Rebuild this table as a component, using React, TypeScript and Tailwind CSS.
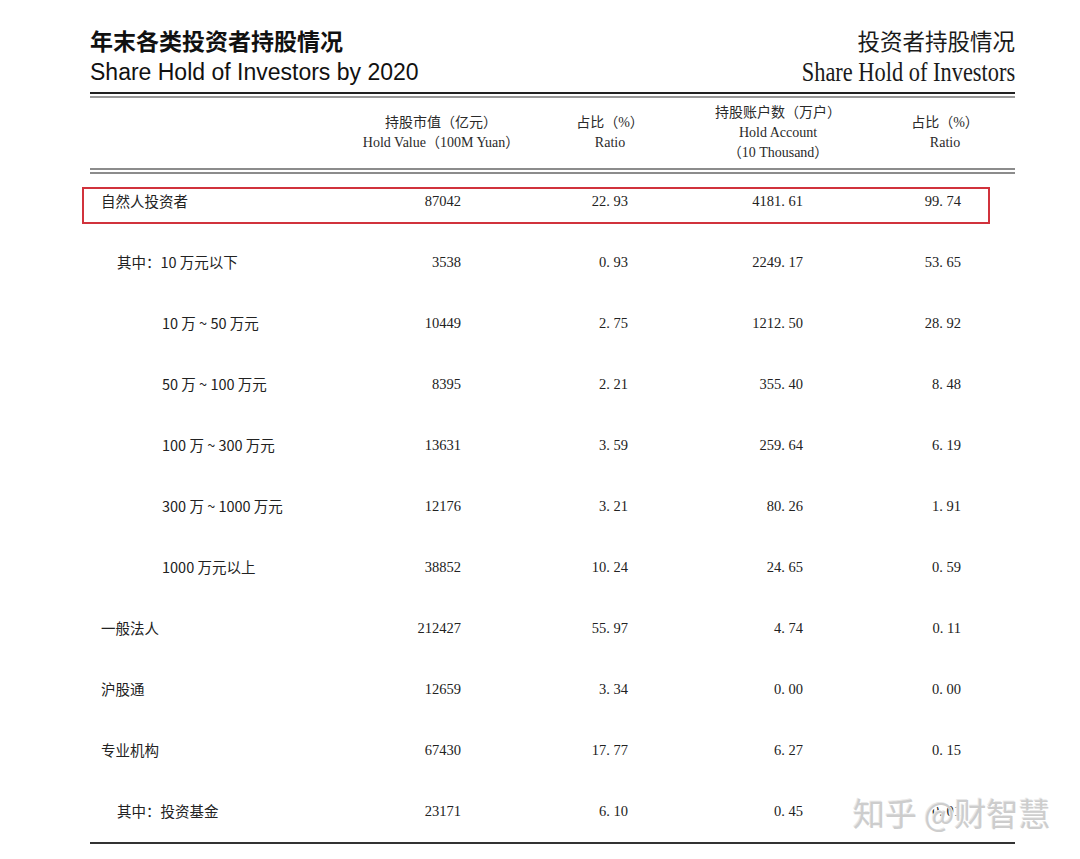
import React from "react";

type Row = {
  label: string;
  level: 0 | 1 | 2;
  value: string;
  ratio: string;
  accounts: string;
  accRatio: string;
};

const rows: Row[] = [
  { label: "自然人投资者", level: 0, value: "87042", ratio: "22. 93", accounts: "4181. 61", accRatio: "99. 74" },
  { label: "其中：10 万元以下", level: 1, value: "3538", ratio: "0. 93", accounts: "2249. 17", accRatio: "53. 65" },
  { label: "10 万 ~ 50 万元", level: 2, value: "10449", ratio: "2. 75", accounts: "1212. 50", accRatio: "28. 92" },
  { label: "50 万 ~ 100 万元", level: 2, value: "8395", ratio: "2. 21", accounts: "355. 40", accRatio: "8. 48" },
  { label: "100 万 ~ 300 万元", level: 2, value: "13631", ratio: "3. 59", accounts: "259. 64", accRatio: "6. 19" },
  { label: "300 万 ~ 1000 万元", level: 2, value: "12176", ratio: "3. 21", accounts: "80. 26", accRatio: "1. 91" },
  { label: "1000 万元以上", level: 2, value: "38852", ratio: "10. 24", accounts: "24. 65", accRatio: "0. 59" },
  { label: "一般法人", level: 0, value: "212427", ratio: "55. 97", accounts: "4. 74", accRatio: "0. 11" },
  { label: "沪股通", level: 0, value: "12659", ratio: "3. 34", accounts: "0. 00", accRatio: "0. 00" },
  { label: "专业机构", level: 0, value: "67430", ratio: "17. 77", accounts: "6. 27", accRatio: "0. 15" },
  { label: "其中：投资基金", level: 1, value: "23171", ratio: "6. 10", accounts: "0. 45", accRatio: "0. 01" },
];

const grid = "grid grid-cols-[266px_170px_168px_168px_166px] w-[938px]";
const cjk = "font-['Noto_Sans_CJK_SC',sans-serif]";
const serif = "font-['Liberation_Serif','Noto_Sans_CJK_SC',serif]";

const HeadCell = ({ lines }: { lines: string[] }) => (
  <div className={`flex flex-col items-center justify-center text-[14px] leading-[20px] text-[#2a2a2a] ${serif}`}>
    {lines.map((l) => (
      <span key={l} className="whitespace-nowrap">
        {l}
      </span>
    ))}
  </div>
);

const DataRow = ({ row, first, last }: { row: Row; first: boolean; last: boolean }) => {
  const pad = row.level === 0 ? "pl-[11px]" : row.level === 1 ? "pl-[27px]" : "pl-[72px]";
  return (
    <div className={`relative ${grid} ${last ? "h-[58px]" : "h-[61px]"} pt-[17px] leading-[20px] text-[#222]`}>
      {first && (
        <div className="absolute left-[-8px] top-[13px] w-[908px] h-[37px] border-2 border-[#d1323c]" />
      )}
      <div className={`${pad} ${cjk} text-[14.5px] whitespace-nowrap`}>{row.label}</div>
      <div className={`pr-[65px] text-right ${serif} text-[14.5px] whitespace-pre`}>{row.value}</div>
      <div className={`pr-[66px] text-right ${serif} text-[14.5px] whitespace-pre`}>{row.ratio}</div>
      <div className={`pr-[59px] text-right ${serif} text-[14.5px] whitespace-pre`}>{row.accounts}</div>
      <div className={`pr-[67px] text-right ${serif} text-[14.5px] whitespace-pre`}>{row.accRatio}</div>
    </div>
  );
};

export default function App() {
  return (
    <div className="relative w-[1080px] h-[859px] bg-white overflow-hidden">
      <div className="ml-[90px] w-[925px] pt-[24px]">
        {/* title */}
        <div className="flex justify-between">
          <div className="text-[#111]">
            <div className={`${cjk} font-bold text-[23px] leading-[32px]`}>年末各类投资者持股情况</div>
            <div className="font-['Liberation_Sans',sans-serif] text-[23px] leading-[32px]">
              Share Hold of Investors by 2020
            </div>
          </div>
          <div className="flex flex-col items-end text-[#1a1a1a]">
            <div className={`${cjk} text-[22.5px] leading-[32px]`}>投资者持股情况</div>
            <div className="font-['Liberation_Serif',serif] text-[27px] leading-[32px] scale-x-[0.83] origin-right whitespace-nowrap">
              Share Hold of Investors
            </div>
          </div>
        </div>

        {/* top double rule */}
        <div className="mt-[4px] h-[2px] bg-[#222]" />
        <div className="mt-[2px] h-[2px] bg-[#9a9a9a]" />

        {/* header */}
        <div className={`${grid} h-[70px]`}>
          <div />
          <HeadCell lines={["持股市值（亿元）", "Hold Value（100M Yuan）"]} />
          <HeadCell lines={["占比（%）", "Ratio"]} />
          <HeadCell lines={["持股账户数（万户）", "Hold Account", "（10 Thousand）"]} />
          <HeadCell lines={["占比（%）", "Ratio"]} />
        </div>

        <div className="h-[2px] bg-[#8c8c8c]" />
        <div className="mt-[2px] h-[2px] bg-[#8c8c8c]" />

        {/* body */}
        {rows.map((r, i) => (
          <DataRow key={r.label} row={r} first={i === 0} last={i === rows.length - 1} />
        ))}
        <div className="h-[2px] bg-[#333]" />
      </div>

      {/* watermark */}
      <div
        className={`absolute left-[853px] top-[792px] ${cjk} text-[32px] leading-[40px] text-[#cdcdcd] whitespace-nowrap [text-shadow:1px_1px_0_#ffffff,-1px_-1px_0_#e8e8e8]`}
      >
        知乎 @财智慧
      </div>
    </div>
  );
}
